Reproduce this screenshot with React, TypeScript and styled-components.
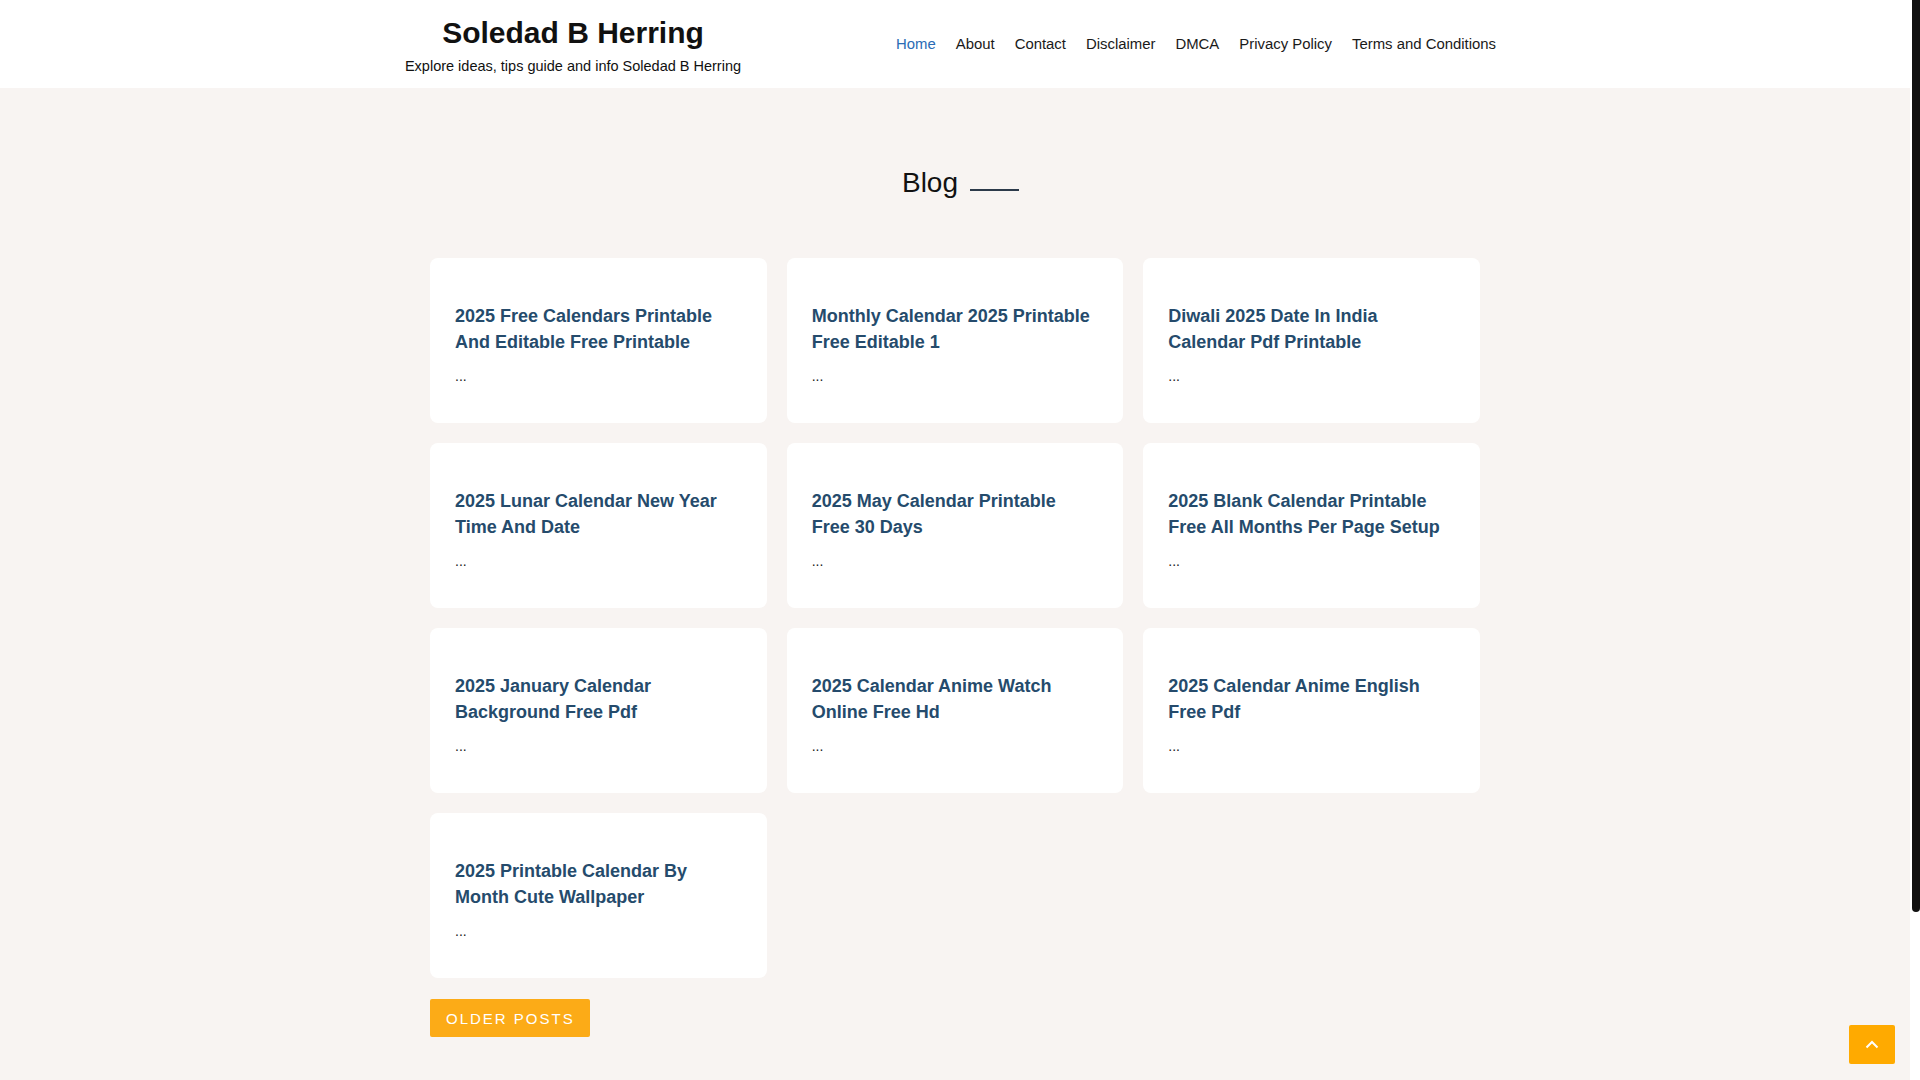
import React from "react";
import styled, { createGlobalStyle } from "styled-components";

const GlobalStyle = createGlobalStyle`
  html, body { margin: 0; padding: 0; }
  body {
    background: #f8f4f2;
    font-family: "Liberation Sans", Arial, sans-serif;
    color: #222;
  }
  #root { padding-right: 10px; }
  * { box-sizing: border-box; }
`;

const ScrollTrack = styled.div`
  position: fixed;
  top: 0;
  right: 0;
  width: 10px;
  height: 100vh;
  background: #ffffff;
  z-index: 20;
`;

const ScrollThumb = styled.div`
  margin-left: 2px;
  width: 8px;
  height: 912px;
  background: #111111;
  border-radius: 0 0 4px 4px;
`;

const HeaderBar = styled.header`
  background: #ffffff;
  height: 88px;
`;

const HeaderInner = styled.div`
  width: 1140px;
  height: 100%;
  margin: 0 auto;
  display: flex;
  justify-content: space-between;
  align-items: center;
`;

const Brand = styled.div`
  width: 376px;
  height: 100%;
  padding-top: 15px;
  display: flex;
  flex-direction: column;
  align-items: center;
  text-align: center;
`;

const SiteTitle = styled.h1`
  margin: 0;
  font-size: 30px;
  line-height: 36px;
  font-weight: 700;
  color: #111;
`;

const Tagline = styled.p`
  margin: 5px 0 0;
  font-size: 14.5px;
  line-height: 20px;
  color: #111;
  white-space: nowrap;
`;

const Nav = styled.nav`
  display: flex;
  margin-right: 19px;
`;

const NavLink = styled.a<{ $active?: boolean }>`
  padding: 0 10px;
  font-size: 14.9px;
  line-height: 20px;
  color: ${(p) => (p.$active ? "#2b6cb5" : "#1a1a1a")};
  text-decoration: none;
  white-space: nowrap;
`;

const Main = styled.main`
  width: 1050px;
  margin: 0 auto;
  padding: 78px 0 243px;
`;

const SectionHeading = styled.div`
  display: flex;
  justify-content: center;
  align-items: flex-end;
  gap: 12px;
  padding-left: 11px;
  margin-bottom: 58px;
`;

const HeadingText = styled.h2`
  margin: 0;
  font-size: 28px;
  line-height: 34px;
  font-weight: 400;
  color: #111;
`;

const HeadingLine = styled.span`
  width: 49px;
  height: 2px;
  margin-bottom: 9px;
  background: #2c3a4a;
`;

const Grid = styled.div`
  display: grid;
  grid-template-columns: repeat(3, 1fr);
  grid-auto-rows: 165px;
  gap: 20px;
`;

const Card = styled.article`
  background: #ffffff;
  border-radius: 8px;
  padding: 45px 25px 0;
`;

const CardTitle = styled.h3`
  margin: 0 0 10px;
  font-size: 18px;
  line-height: 26px;
  font-weight: 700;
  color: #254b6c;
`;

const Excerpt = styled.p`
  margin: 0;
  font-size: 14px;
  line-height: 22px;
  color: #222;
`;

const OlderButton = styled.button`
  margin-top: 21px;
  height: 38px;
  padding: 0 15px 0 16px;
  border: none;
  border-radius: 2px;
  background: #fcab17;
  color: #ffffff;
  font-family: "Liberation Sans", Arial, sans-serif;
  font-size: 15px;
  letter-spacing: 2px;
  text-transform: uppercase;
  cursor: pointer;
`;

const ToTop = styled.button`
  position: fixed;
  right: 25px;
  bottom: 16px;
  width: 46px;
  height: 39px;
  border: none;
  border-radius: 2px;
  background: #ffaa00;
  display: flex;
  align-items: center;
  justify-content: center;
  padding: 0;
  cursor: pointer;
`;

const posts = [
  "2025 Free Calendars Printable And Editable Free Printable",
  "Monthly Calendar 2025 Printable Free Editable 1",
  "Diwali 2025 Date In India Calendar Pdf Printable",
  "2025 Lunar Calendar New Year Time And Date",
  "2025 May Calendar Printable Free 30 Days",
  "2025 Blank Calendar Printable Free All Months Per Page Setup",
  "2025 January Calendar Background Free Pdf",
  "2025 Calendar Anime Watch Online Free Hd",
  "2025 Calendar Anime English Free Pdf",
  "2025 Printable Calendar By Month Cute Wallpaper",
];

const navItems = [
  "Home",
  "About",
  "Contact",
  "Disclaimer",
  "DMCA",
  "Privacy Policy",
  "Terms and Conditions",
];

export default function App() {
  return (
    <>
      <GlobalStyle />
      <HeaderBar>
        <HeaderInner>
          <Brand>
            <SiteTitle>Soledad B Herring</SiteTitle>
            <Tagline>Explore ideas, tips guide and info Soledad B Herring</Tagline>
          </Brand>
          <Nav>
            {navItems.map((n, i) => (
              <NavLink key={n} href="#" $active={i === 0}>
                {n}
              </NavLink>
            ))}
          </Nav>
        </HeaderInner>
      </HeaderBar>
      <Main>
        <SectionHeading>
          <HeadingText>Blog</HeadingText>
          <HeadingLine />
        </SectionHeading>
        <Grid>
          {posts.map((p) => (
            <Card key={p}>
              <CardTitle>{p}</CardTitle>
              <Excerpt>...</Excerpt>
            </Card>
          ))}
        </Grid>
        <OlderButton>Older Posts</OlderButton>
      </Main>
      <ToTop aria-label="Back to top">
        <svg width="14" height="9" viewBox="0 0 14 9" fill="none">
          <path d="M1.5 7.5 L7 2 L12.5 7.5" stroke="#fff" strokeWidth="2" />
        </svg>
      </ToTop>
      <ScrollTrack>
        <ScrollThumb />
      </ScrollTrack>
    </>
  );
}
